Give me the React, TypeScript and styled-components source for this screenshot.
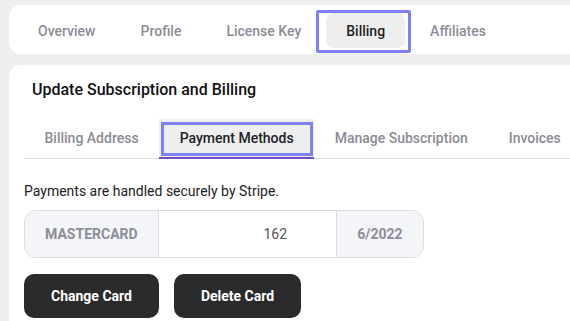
import { createGlobalStyle } from "styled-components";
import styled from "styled-components";

const GlobalStyle = createGlobalStyle`
  html, body {
    margin: 0;
    padding: 0;
    background: #efefef;
    overflow: hidden;
    font-family: Roboto, "Liberation Sans", sans-serif;
  }
`;

const Page = styled.div`
  width: 600px;
  padding: 5px 0 0 9px;
  display: flex;
  flex-direction: column;
  gap: 11px;
`;

const Card = styled.div`
  background: #fff;
  border-radius: 12px;
`;

const NavCard = styled(Card)`
  display: flex;
  align-items: center;
  gap: 5px;
  padding: 8px 9px 6px 9px;
`;

const NavTab = styled.div<{ $active?: boolean }>`
  position: relative;
  height: 35px;
  display: flex;
  align-items: center;
  padding: 0 20px;
  border-radius: 8px;
  font-size: 14px;
  font-weight: 500;
  color: ${(p) => (p.$active ? "#1f1f24" : "#8b8c95")};
  background: ${(p) => (p.$active ? "#eeeeee" : "transparent")};

  ${(p) =>
    p.$active &&
    `
    &::after {
      content: "";
      position: absolute;
      top: -3px;
      bottom: -5px;
      left: -10px;
      right: -6px;
      border: 3px solid #7f7ff7;
      border-radius: 2px;
      pointer-events: none;
    }
  `}
`;

const MainCard = styled(Card)`
  padding: 15px 0 20px 15px;
  min-height: 300px;
`;

const Title = styled.h2`
  margin: 0 0 19px 8px;
  font-size: 16px;
  font-weight: 500;
  color: #111;
  line-height: 20px;
`;

const SubTabs = styled.div`
  display: flex;
  border-bottom: 1px solid #dddddd;
`;

const SubTab = styled.div<{ $active?: boolean }>`
  position: relative;
  height: 40px;
  display: flex;
  align-items: center;
  padding: 0 20.5px;
  font-size: 14px;
  font-weight: 500;
  color: ${(p) => (p.$active ? "#22222a" : "#8b8c95")};
  background: ${(p) => (p.$active ? "#eeeeee" : "transparent")};
  box-sizing: border-box;
  border-bottom: 2px solid ${(p) => (p.$active ? "#6a4fc4" : "transparent")};
  margin-bottom: -1px;

  ${(p) =>
    p.$active &&
    `
    &::after {
      content: "";
      position: absolute;
      top: 3px;
      bottom: 1px;
      left: 2px;
      right: 1px;
      border: 3px solid #8080f8;
      pointer-events: none;
    }
  `}
`;

const Notice = styled.p`
  margin: 23px 0 10px 0;
  font-size: 14px;
  color: #222;
  line-height: 18px;
`;

const CardGroup = styled.div`
  display: flex;
  width: 400px;
  height: 48px;
  border: 1px solid #dcdde4;
  border-radius: 12px;
  overflow: hidden;
  box-sizing: border-box;
`;

const Segment = styled.div<{ $width: number; $muted?: boolean }>`
  width: ${(p) => p.$width}px;
  display: flex;
  align-items: center;
  justify-content: center;
  background: ${(p) => (p.$muted ? "#f4f5f9" : "#fff")};
  color: ${(p) => (p.$muted ? "#8d8e97" : "#555")};
  font-size: 14px;
  font-weight: ${(p) => (p.$muted ? 700 : 400)};
  & + & {
    border-left: 1px solid #dcdde4;
  }
`;

const CardNumber = styled.span`
  padding-left: 56px;
`;

const Actions = styled.div`
  display: flex;
  gap: 15px;
  margin-top: 16px;
`;

const DarkButton = styled.button`
  height: 44px;
  padding: 0 27px;
  border: none;
  border-radius: 10px;
  background: #2b2b2d;
  color: #fff;
  font-family: Roboto, "Liberation Sans", sans-serif;
  font-size: 14px;
  font-weight: 700;
  cursor: pointer;
`;

const navTabs = ["Overview", "Profile", "License Key", "Billing", "Affiliates"];
const subTabs = ["Billing Address", "Payment Methods", "Manage Subscription", "Invoices"];

export default function App() {
  return (
    <>
      <GlobalStyle />
      <Page>
        <NavCard>
          {navTabs.map((t) => (
            <NavTab key={t} $active={t === "Billing"}>
              {t}
            </NavTab>
          ))}
        </NavCard>
        <MainCard>
          <Title>Update Subscription and Billing</Title>
          <SubTabs>
            {subTabs.map((t) => (
              <SubTab key={t} $active={t === "Payment Methods"}>
                {t}
              </SubTab>
            ))}
          </SubTabs>
          <Notice>Payments are handled securely by Stripe.</Notice>
          <CardGroup>
            <Segment $width={134} $muted>
              MASTERCARD
            </Segment>
            <Segment $width={179}>
              <CardNumber>162</CardNumber>
            </Segment>
            <Segment $width={87} $muted>
              6/2022
            </Segment>
          </CardGroup>
          <Actions>
            <DarkButton>Change Card</DarkButton>
            <DarkButton>Delete Card</DarkButton>
          </Actions>
        </MainCard>
      </Page>
    </>
  );
}
